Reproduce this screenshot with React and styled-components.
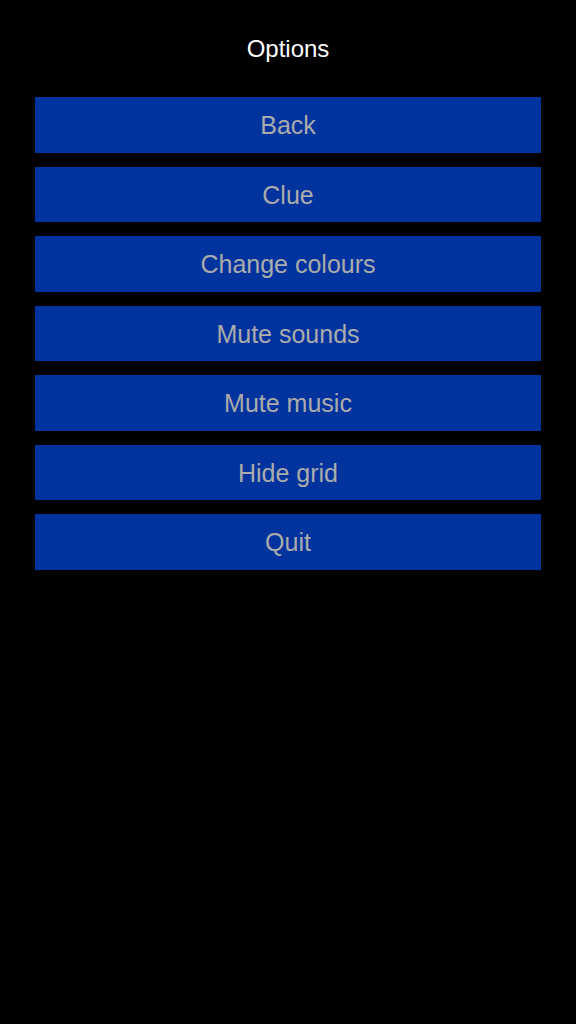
import React from "react";
import styled, { createGlobalStyle } from "styled-components";

const GlobalStyle = createGlobalStyle`
  html, body {
    margin: 0;
    padding: 0;
    background: #000;
  }
  body {
    font-family: "Liberation Sans", Arial, sans-serif;
  }
`;

const Screen = styled.div`
  width: 576px;
  min-height: 1024px;
  background: #000;
  display: flex;
  flex-direction: column;
  align-items: center;
`;

const Title = styled.h1`
  margin: 0 0 34px;
  padding-top: 35px;
  font-size: 24px;
  font-weight: 400;
  line-height: 28px;
  color: #fff;
`;

const Menu = styled.div`
  width: 506px;
  display: flex;
  flex-direction: column;
  gap: 14px;
`;

const MenuButton = styled.button`
  height: 55.5px;
  border: none;
  margin: 0;
  padding: 2px 0 0;
  background: #01339e;
  color: #ababab;
  font-family: "Liberation Sans", Arial, sans-serif;
  font-size: 25px;
  display: flex;
  align-items: center;
  justify-content: center;
  cursor: pointer;
`;

const items = [
  "Back",
  "Clue",
  "Change colours",
  "Mute sounds",
  "Mute music",
  "Hide grid",
  "Quit",
];

const App = () => {
  return (
    <>
      <GlobalStyle />
      <Screen>
        <Title>Options</Title>
        <Menu>
          {items.map((label) => (
            <MenuButton key={label}>{label}</MenuButton>
          ))}
        </Menu>
      </Screen>
    </>
  );
};

export default App;
